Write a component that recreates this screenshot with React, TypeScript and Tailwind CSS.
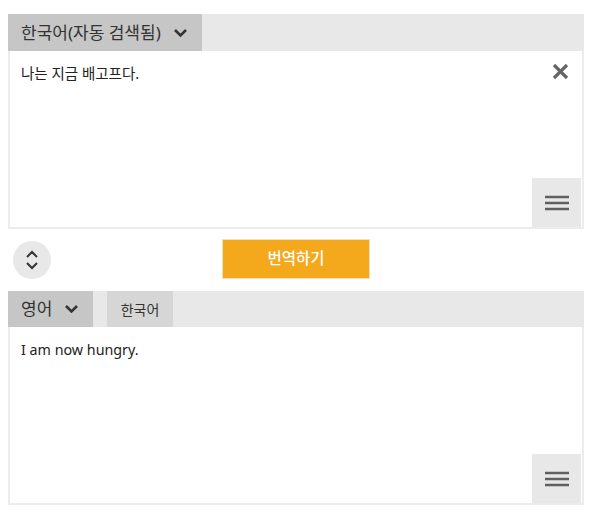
import { useState } from 'react';

const font = { fontFamily: '"Noto Sans", "Noto Sans CJK KR", sans-serif' };

function Chevron() {
  return (
    <svg width="15" height="10" viewBox="0 0 15 10" className="ml-[12px]">
      <path d="M2 2 L7.5 7.5 L13 2" fill="none" stroke="#333" strokeWidth="2.6" />
    </svg>
  );
}

function MenuButton() {
  return (
    <button className="absolute right-[1px] bottom-0 w-[49px] h-[49px] bg-[#e8e8e8] flex items-center justify-center">
      <svg width="24" height="18" viewBox="0 0 24 18">
        <path d="M0 3 H24 M0 9 H24 M0 15 H24" stroke="#606060" strokeWidth="2.6" />
      </svg>
    </button>
  );
}

export default function App() {
  const [source] = useState('나는 지금 배고프다.');
  const [target] = useState('I am now hungry.');

  return (
    <div className="w-[599px] h-[519px] bg-white pt-[14px] px-[8px]" style={font}>
      <div className="w-[576px]">
        {/* source */}
        <div className="h-[37px] bg-[#e8e8e8] flex">
          <button className="w-[194px] h-full bg-[#c6c6c6] flex items-center pl-[13px] text-[17px] text-[#333]">
            한국어(자동 검색됨)
            <Chevron />
          </button>
        </div>
        <div className="relative h-[178px] border-2 border-t-0 border-[#ececec]">
          <p className="pl-[11px] pt-[12px] text-[14.5px] text-[#222]">{source}</p>
          <button className="absolute right-[12px] top-[11px] w-[19px] h-[19px] flex items-center justify-center">
            <svg width="17" height="17" viewBox="0 0 17 17">
              <path d="M2 2 L15 15 M15 2 L2 15" stroke="#666" strokeWidth="3.2" />
            </svg>
          </button>
          <MenuButton />
        </div>

        {/* controls */}
        <div className="h-[62px] grid grid-cols-[1fr_auto_1fr]">
          <div className="pt-[12px]">
            <button className="ml-[5px] w-[38px] h-[38px] rounded-full bg-[#e8e8e8] flex items-center justify-center">
              <svg width="14" height="20" viewBox="0 0 14 20">
                <path d="M2 7 L7 2 L12 7 M2 13 L7 18 L12 13" fill="none" stroke="#333" strokeWidth="2" />
              </svg>
            </button>
          </div>
          <button className="w-[148px] h-[40px] mt-[10px] bg-[#f4a91c] border border-[#f0e0c0] text-white text-[15.5px] font-medium">
            번역하기
          </button>
          <div />
        </div>

        {/* target */}
        <div className="h-[36px] bg-[#e8e8e8] flex gap-[14px]">
          <button className="w-[85px] h-full bg-[#c6c6c6] flex items-center pl-[13px] text-[17px] text-[#333]">
            영어
            <Chevron />
          </button>
          <button className="w-[66px] h-full bg-[#d6d6d6] flex items-center justify-center text-[14px] text-[#333]">
            한국어
          </button>
        </div>
        <div className="relative h-[178px] border-2 border-t-0 border-[#ececec]">
          <p className="pl-[11px] pt-[12px] text-[14.3px] text-[#222]">{target}</p>
          <MenuButton />
        </div>
      </div>
    </div>
  );
}
